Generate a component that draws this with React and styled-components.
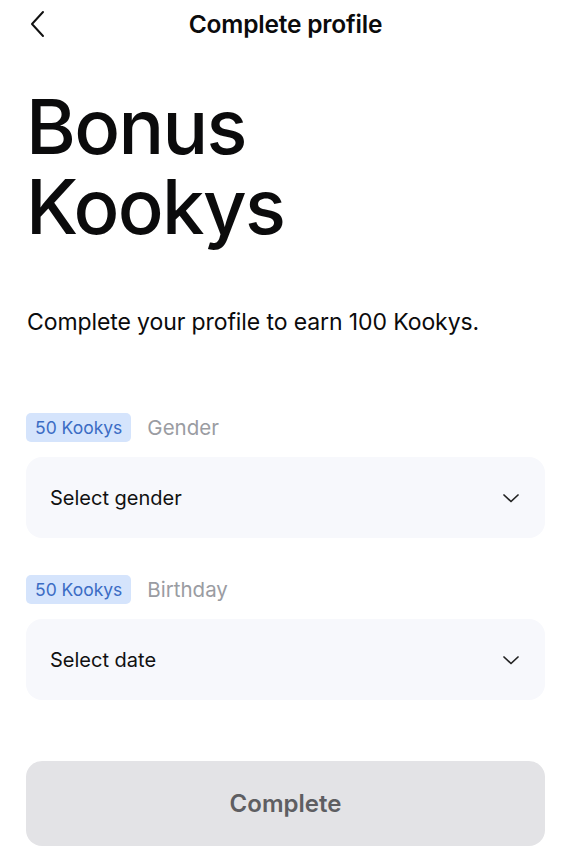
import React from "react";
import styled, { createGlobalStyle } from "styled-components";

const GlobalStyle = createGlobalStyle`
  html, body {
    margin: 0;
    padding: 0;
    background: #ffffff;
  }
  body {
    font-family: "Inter", "Noto Sans", sans-serif;
    color: #0b0b0c;
  }
`;

const Page = styled.div`
  width: 568px;
  min-height: 868px;
  box-sizing: border-box;
  padding: 0 23px 0 26px;
  display: flex;
  flex-direction: column;
`;

const TopBar = styled.header`
  height: 48px;
  display: grid;
  grid-template-columns: 40px 1fr 40px;
  align-items: center;
`;

const BackButton = styled.button`
  border: none;
  background: none;
  padding: 0 0 0 3px;
  width: 24px;
  height: 30px;
  display: flex;
  align-items: center;
  cursor: pointer;
  color: #111;
`;

const Title = styled.h1`
  margin: 0;
  text-align: center;
  font-size: 24.5px;
  font-weight: 600;
  letter-spacing: -0.2px;
`;

const Heading = styled.h2`
  margin: 38px 0 0 0;
  font-size: 76px;
  font-weight: 500;
  line-height: 80px;
  letter-spacing: -1.7px;
`;

const Lead = styled.p`
  margin: 62px 0 0 1px;
  font-size: 23px;
  font-weight: 400;
  letter-spacing: -0.1px;
`;

const Fields = styled.div`
  margin-top: 77px;
  display: flex;
  flex-direction: column;
  gap: 37px;
`;

const Field = styled.div`
  display: flex;
  flex-direction: column;
  gap: 15px;
`;

const LabelRow = styled.div`
  display: flex;
  align-items: center;
  gap: 16px;
`;

const Badge = styled.span`
  background: #d5e4fc;
  color: #3b6cc4;
  font-size: 17.5px;
  border-radius: 5px;
  padding: 4px 9px;
  line-height: 21px;
`;

const Label = styled.span`
  color: #9a9ca2;
  font-size: 20.5px;
`;

const Select = styled.button`
  border: none;
  width: 100%;
  height: 81px;
  border-radius: 16px;
  background: #f7f8fc;
  display: flex;
  align-items: center;
  justify-content: space-between;
  padding: 0 24px 0 24px;
  font-family: inherit;
  font-size: 20px;
  color: #111;
  cursor: pointer;
`;

const Footer = styled.div`
  margin-top: 61px;
`;

const SubmitButton = styled.button`
  width: 100%;
  height: 85px;
  border: none;
  border-radius: 16px;
  background: #e3e3e6;
  color: #5e5e62;
  font-family: "Inter", "Noto Sans", sans-serif;
  font-size: 24px;
  font-weight: 600;
  cursor: default;
`;

const Chevron = () => (
  <svg width="20" height="20" viewBox="0 0 20 20" fill="none">
    <path d="M3 7l7 6.5L17 7" stroke="#222" strokeWidth="1.7" strokeLinecap="round" strokeLinejoin="round" />
  </svg>
);

const BackIcon = () => (
  <svg width="18" height="28" viewBox="0 0 18 28" fill="none">
    <path d="M14 2L3 14l11 12" stroke="#111" strokeWidth="2" strokeLinecap="round" strokeLinejoin="round" />
  </svg>
);

const fields = [
  { label: "Gender", placeholder: "Select gender" },
  { label: "Birthday", placeholder: "Select date" },
];

export default function App() {
  return (
    <>
      <GlobalStyle />
      <Page>
        <TopBar>
          <BackButton aria-label="Back">
            <BackIcon />
          </BackButton>
          <Title>Complete profile</Title>
          <span />
        </TopBar>
        <Heading>
          Bonus
          <br />
          Kookys
        </Heading>
        <Lead>Complete your profile to earn 100 Kookys.</Lead>
        <Fields>
          {fields.map((f) => (
            <Field key={f.label}>
              <LabelRow>
                <Badge>50 Kookys</Badge>
                <Label>{f.label}</Label>
              </LabelRow>
              <Select>
                <span>{f.placeholder}</span>
                <Chevron />
              </Select>
            </Field>
          ))}
        </Fields>
        <Footer>
          <SubmitButton>Complete</SubmitButton>
        </Footer>
      </Page>
    </>
  );
}
